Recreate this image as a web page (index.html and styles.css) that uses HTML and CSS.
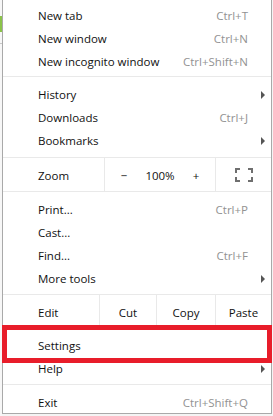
FILE: index.html
```html
<!DOCTYPE html>
<html>
  <head>
    <meta charset="utf-8" />
    <title>Menu</title>
    <meta name="viewport" content="width=device-width, initial-scale=1" />
    <link rel="stylesheet" href="styles.css">
  </head>
  <body>
    <div class="frame">
      <div class="edge">
        <span class="tab-mark"></span>
        <span class="tick"></span>
      </div>
      <div class="menu">
        <div class="group group-top">
          <div class="item"><span class="label">New tab</span><span class="key">Ctrl+T</span></div>
          <div class="item"><span class="label">New window</span><span class="key">Ctrl+N</span></div>
          <div class="item"><span class="label">New incognito window</span><span class="key">Ctrl+Shift+N</span></div>
        </div>
        <div class="sep"></div>
        <div class="group group-nav">
          <div class="item"><span class="label">History</span><span class="arrow"></span></div>
          <div class="item"><span class="label">Downloads</span><span class="key">Ctrl+J</span></div>
          <div class="item"><span class="label">Bookmarks</span><span class="arrow"></span></div>
        </div>
        <div class="sep"></div>
        <div class="row zoom-row">
          <span class="label">Zoom</span>
          <div class="zoom-controls">
            <span class="btn btn-minus">&minus;</span>
            <span class="zoom-value">100%</span>
            <span class="btn btn-plus">+</span>
          </div>
          <div class="fullscreen">
            <svg width="18" height="14" viewBox="0 0 18 14" fill="none" stroke="#6f6f6f" stroke-width="2">
              <path d="M1 5V1H5M13 1H17V5M17 9V13H13M5 13H1V9" />
            </svg>
          </div>
        </div>
        <div class="sep"></div>
        <div class="group">
          <div class="item"><span class="label">Print...</span><span class="key">Ctrl+P</span></div>
          <div class="item"><span class="label">Cast...</span></div>
          <div class="item"><span class="label">Find...</span><span class="key">Ctrl+F</span></div>
          <div class="item"><span class="label">More tools</span><span class="arrow"></span></div>
        </div>
        <div class="sep"></div>
        <div class="row edit-row">
          <span class="label">Edit</span>
          <span class="cell cell-cut">Cut</span>
          <span class="cell cell-copy">Copy</span>
          <span class="cell cell-paste">Paste</span>
        </div>
        <div class="sep"></div>
        <div class="group group-settings">
          <div class="highlight"></div>
          <div class="item"><span class="label">Settings</span></div>
          <div class="item"><span class="label">Help</span><span class="arrow"></span></div>
        </div>
        <div class="sep"></div>
        <div class="group group-last">
          <div class="item"><span class="label">Exit</span><span class="key">Ctrl+Shift+Q</span></div>
        </div>
      </div>
    </div>
  </body>
</html>
```

FILE: styles.css
```css
html,
body {
  margin: 0;
  padding: 0;
}
body {
  background: #f4f4f4;
  font-family: "Open Sans", "Noto Sans", sans-serif;
  font-size: 11.5px;
  color: #111;
}

.frame {
  display: flex;
  width: 273px;
  height: 416px;
}
.edge {
  width: 2px;
  display: flex;
  flex-direction: column;
  background: #f7f7f7;
}
.tab-mark {
  margin-top: 16px;
  height: 16px;
  background: #8bc34a;
}
.tick {
  margin-top: 11px;
  height: 1px;
  background: #c8c8c8;
}

.menu {
  width: 268px;
  height: 413px;
  background: #fff;
  border: 1px solid #a9a9a9;
  border-top: 0;
}

.group {
  padding: 6px 0 4px;
}
.group-top {
  padding-top: 4px;
  padding-bottom: 3px;
}
.group-nav {
  padding-bottom: 5px;
}
.group-settings {
  position: relative;
  padding-top: 5px;
}
.group-last {
  padding: 6px 0 0;
}

.sep {
  height: 1px;
  background: #e9e9e9;
}

.item {
  display: flex;
  align-items: center;
  height: 23px;
  padding: 0 6px 0 35px;
}
.label {
  flex: 1;
}
.key {
  margin-right: 17px;
  color: #929292;
}
.arrow {
  width: 0;
  height: 0;
  border-top: 4px solid transparent;
  border-bottom: 4px solid transparent;
  border-left: 4px solid #555;
}

.row {
  display: flex;
  align-items: stretch;
  height: 33px;
}
.row .label {
  flex: 0 0 auto;
  display: flex;
  align-items: center;
  padding-top: 2px;
  padding-left: 35px;
}
.row .btn,
.row .zoom-value,
.row .cell {
  padding-top: 2px;
}

.zoom-row .label {
  width: 66px;
  flex: 0 0 66px;
  padding-left: 35px;
}
.zoom-controls {
  display: flex;
  align-items: center;
  border-left: 1px solid #e9e9e9;
  border-right: 1px solid #e9e9e9;
}
.btn {
  width: 38px;
  text-align: center;
}
.zoom-value {
  width: 34px;
  text-align: center;
}
.fullscreen {
  flex: 1;
  display: flex;
  align-items: center;
  justify-content: center;
}

.edit-row .label {
  width: 61px;
  flex: 0 0 61px;
}
.cell {
  display: flex;
  align-items: center;
  justify-content: center;
  border-left: 1px solid #e9e9e9;
}
.cell-cut {
  width: 56px;
}
.cell-copy {
  width: 58px;
}
.cell-paste {
  flex: 1;
}

.highlight {
  position: absolute;
  left: -1px;
  right: -1px;
  top: -4px;
  height: 38px;
  border: 5px solid #e81d2a;
  box-sizing: border-box;
}
```
